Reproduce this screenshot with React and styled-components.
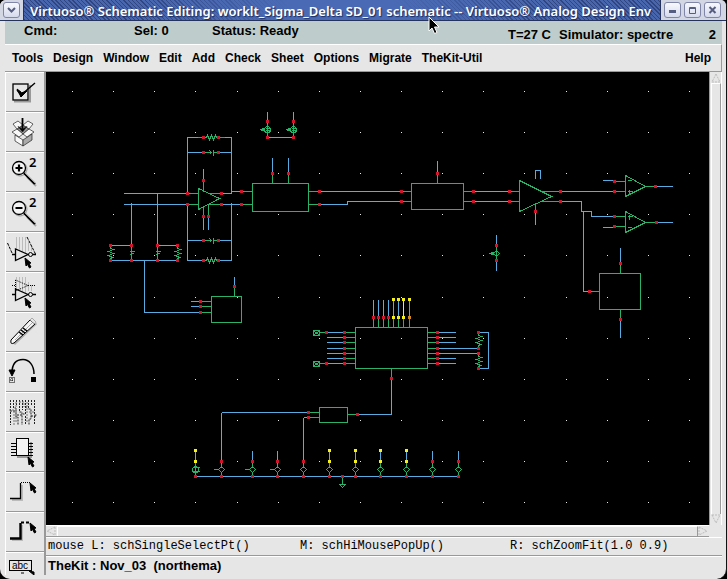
import React from 'react';
import styled, { createGlobalStyle } from 'styled-components';

const GlobalStyle = createGlobalStyle`
  * {
    box-sizing: border-box;
  }
  body {
    margin: 0;
    background: #000;
    font-family: 'Liberation Sans', Arial, sans-serif;
    color: #000;
  }
  button {
    margin: 0;
    padding: 0;
    border: 0;
    background: none;
    color: inherit;
    font: inherit;
  }
`;

const Window = styled.div`
  position: relative;
  display: flex;
  flex-direction: column;
  height: 100vh;
  overflow: hidden;
  background: #e6e6e6;
  border-right: 1px solid #111;
  border-radius: 6px 6px 10px 10px;
`;

const TitleBar = styled.header`
  display: flex;
  flex: none;
  height: 21px;
  background: #d3d7e4;
  border-bottom: 1px solid #25335c;
`;

const TitleStrip = styled.div`
  flex: 1;
  min-width: 0;
  overflow: hidden;
  margin-left: 3px;
  padding-left: 6px;
  border-left: 1px solid #25335c;
  border-right: 1px solid #25335c;
  background:
    linear-gradient(90deg, transparent 18%, #4a6ab5 42%, #4a6ab5 58%, transparent 82%),
    repeating-linear-gradient(45deg, #30457f 0 1px, #4866ae 1px 3px);
`;

const Title = styled.h1`
  margin: 0;
  color: #fff;
  font-family: 'Noto Sans', sans-serif;
  font-size: 13px;
  font-weight: 600;
  line-height: 22px;
  white-space: nowrap;
  text-shadow: 1px 1px 1px #1c2c5c;
`;

const WindowButtons = styled.div`
  display: flex;
  gap: 3px;
  padding: 0 5px 0 3px;
`;

const WindowButton = styled.button`
  width: 17px;
  height: 16px;
  margin-top: 2px;
  margin-left: ${({ $menu }) => ($menu ? '3px' : '0')};
  border: 1px solid #7f86a8;
  border-radius: 3px;
  background: linear-gradient(#f8f9fe, #d5daec);
  svg {
    display: block;
    margin: auto;
  }
`;

const StatusBar = styled.div`
  display: flex;
  flex: none;
  height: 23px;
  margin: 0 4px 0 5px;
  padding: 0 6px 0 19px;
  background: #becccb;
  font-size: 13px;
  font-weight: bold;
  line-height: 19px;
  white-space: pre;
`;

const StatusItem = styled.span`
  width: ${({ $width }) => $width};
  flex: ${({ $grow }) => ($grow ? 1 : 'none')};
  padding-top: ${({ $low }) => ($low ? '4px' : '0')};
  text-align: ${({ $right }) => ($right ? 'right' : 'left')};
`;

const MenuBar = styled.nav`
  display: flex;
  flex: none;
  gap: 10px;
  height: 28px;
  margin: 0 4px 0 5px;
  padding: 0 10px 0 7px;
  border-top: 1px solid #fff;
  border-right: 1px solid #999;
  border-bottom: 1px solid #999;
  font-size: 12px;
  font-weight: bold;
`;

const MenuItem = styled.button`
  margin-left: ${({ $last }) => ($last ? 'auto' : '0')};
`;

const Body = styled.main`
  display: flex;
  flex: 1;
  min-height: 0;
  margin: 0 4px 4px 5px;
`;

const Toolbar = styled.div`
  flex: none;
  width: 41px;
  margin-right: -1px;
  overflow: hidden;
  border-left: 1px solid #fff;
  border-right: 2px solid #999;
`;

const ToolButton = styled.button`
  display: block;
  width: 38px;
  height: 40px;
  border-top: 1px solid #fff;
  border-bottom: 1px solid #999;
  svg {
    display: block;
    margin: -1px 0 0 -1px;
  }
`;

const Workspace = styled.section`
  display: flex;
  flex: 1;
  flex-direction: column;
  min-width: 0;
  padding-left: 1px;
`;

const View = styled.div`
  display: flex;
  flex: 1;
  min-height: 0;
`;

const Canvas = styled.svg`
  display: block;
  flex: 1;
  min-width: 0;
  height: 100%;
  background: #000;
`;

const VerticalScroll = styled.div`
  display: flex;
  flex: none;
  flex-direction: column;
  justify-content: space-between;
  width: 13px;
  padding: 1px 0 1px 1px;
  border-right: 1px solid #fff;
  border-left: 1px solid #999;
`;

const HorizontalScroll = styled.div`
  display: flex;
  flex: none;
  justify-content: space-between;
  height: 12px;
  margin-right: 13px;
  border-top: 1px solid #fff;
  border-bottom: 1px solid #999;
`;

const ScrollThumb = styled.div`
  flex: 1;
  border-top: 1px solid #fff;
  border-left: 1px solid #fff;
  border-right: 1px solid #999;
`;

const ScrollArrow = styled.button`
  flex: none;
  width: 11px;
  height: 10px;
  svg {
    display: block;
  }
`;

const MouseLine = styled.div`
  display: grid;
  grid-template-columns: 252fr 210fr 212fr;
  flex: none;
  height: 19px;
  padding-left: 2px;
  border-top: 1px solid #fff;
  border-bottom: 1px solid #999;
  font-family: 'Liberation Mono', monospace;
  font-size: 12px;
  line-height: 17px;
  white-space: nowrap;
`;

const Message = styled.div`
  flex: none;
  height: 19px;
  padding-left: 2px;
  border-top: 1px solid #fff;
  font-size: 13px;
  font-weight: bold;
  line-height: 18px;
  white-space: pre;
`;

const Pointer = styled.svg`
  position: absolute;
  top: 16px;
  left: 428px;
`;

const GREEN = '#2bb269';
const BLUE = '#58acdf';
const RED = '#d0142c';
const YELLOW = '#f4f01e';
const ORANGE = '#cf8a22';

const MENUS = ['Tools', 'Design', 'Window', 'Edit', 'Add', 'Check', 'Sheet', 'Options', 'Migrate', 'TheKit-Util'];

const SmallCursor = ({ x, y }) => (
  <path transform={`translate(${x} ${y})`} d='M0 0L6 5L4 5.500L6 9L4.500 10L2.500 6.500L1 8Z' fill='#000' />
);

const Magnifier = ({ plus }) => (
  <g fill='none' stroke='#000'>
    <path d='M22 25L31 34' stroke='#aaa' strokeWidth='2' />
    <circle cx='15' cy='17' r='7' stroke='#999' />
    <circle cx='14' cy='16' r='6.500' fill='#f4f4f4' strokeWidth='1.300' />
    <path d={plus ? 'M10.500 16H17.500M14 12.500V19.500' : 'M10.500 16H17.500'} strokeWidth='2.200' />
    <path d='M19 21L30 32' strokeWidth='2.200' />
    <path d='M20 21L30 31' stroke='#ddd' strokeWidth='0.700' />
    <text x='24' y='15' fill='#000' stroke='none' fontFamily='Noto Sans' fontSize='13' fontWeight='600'>2</text>
  </g>
);

const Gate = ({ ghost }) => (
  <g fill='none' stroke='#000'>
    <path d='M11.500 5V18M14.500 5V18M17.500 5V20M20.500 5V21M23.500 10V19M26.500 13V19' stroke='#bbb' />
    {ghost ? (
      <path d='M10.500 8V19L23 13.500ZM7 13.500H10M23 13.500H30' strokeDasharray='1 1' />
    ) : (
      <path d='M2.500 11L7.500 22M22 5L30.500 22' strokeDasharray='3 1' />
    )}
    <path d='M10.500 17V28.500L23 22.500ZM7 22.500H10.500M27.500 22.500H31' strokeWidth='1.300' />
    <circle cx='25.500' cy='22.500' r='2' />
    <SmallCursor x={20} y={26} />
  </g>
);

const WireCorner = ({ thick }) => (
  <g fill='none' stroke='#000'>
    <path d='M7 28H17V13' stroke='#bbb' strokeWidth='2' />
    <path d='M5 26.500H15.500V11' strokeWidth={thick ? 2.400 : 1.300} />
    <path d='M16 10.500H26' strokeWidth={thick ? 2 : 1} strokeDasharray={thick ? '3 2' : '1 1'} />
    <SmallCursor x={25} y={11} />
  </g>
);

const TOOLS = [
  {
    name: 'Check and save',
    icon: (
      <g fill='none' stroke='#000'>
        <path d='M9 29.500H25V13' stroke='#999' strokeWidth='2' />
        <rect x='8' y='12' width='15' height='16' strokeWidth='1.300' />
        <path d='M12 18L16 23L30 11' strokeWidth='1.400' />
        <path d='M12 17L16 20V25Z M16 25L22 19L16 21Z' fill='#000' />
      </g>
    ),
  },
  {
    name: 'Save',
    icon: (
      <g fill='#f8f8f8' stroke='#222' strokeWidth='0.700'>
        <path d='M10 23L18 28V34L10 29Z' />
        <path d='M18 28L27 22V28L18 34Z' fill='#aaa' />
        <path d='M12 17L18 13L24 17L18 22Z' fill='#999' />
        <path d='M12 17L18 22L14 25L7 20ZM24 17L18 22L22 25L29 20ZM12 17L8 12L13 9L18 13ZM24 17L28 12L23 9L18 13Z' />
        <path d='M17.500 6V18' stroke='#000' strokeWidth='1.800' />
        <path d='M13 14.500L17.500 20L22 14.500L17.500 17Z' fill='#000' />
      </g>
    ),
  },
  { name: 'Zoom in', icon: <Magnifier plus /> },
  { name: 'Zoom out', icon: <Magnifier /> },
  { name: 'Stretch', icon: <Gate /> },
  { name: 'Copy', icon: <Gate ghost /> },
  {
    name: 'Delete',
    icon: (
      <g fill='none' stroke='#000'>
        <path d='M9 32L31 11' stroke='#aaa' strokeWidth='3' />
        <path d='M6 28L25 8L30 12L9 31Q5 33 6 28Z' fill='#f5f5f5' />
        <path d='M10 28L27 11' stroke='#aaa' />
        <path d='M14 20L18 23M16 18L20 21M18 16L22 19' strokeWidth='1.500' />
        <path d='M25 8L27 6L31 10L30 12' fill='#e6e6e6' stroke='#aaa' />
      </g>
    ),
  },
  {
    name: 'Undo',
    icon: (
      <g fill='none' stroke='#000'>
        <path d='M7 21C7 11 12 7.500 18 7.500C24 7.500 29 13 29 22' strokeWidth='1.500' />
        <path d='M4 18H10L7 24Z' fill='#000' />
        <rect x='26.500' y='25.500' width='4' height='4' fill='#000' />
        <rect x='4.500' y='25.500' width='5' height='5' strokeDasharray='1 1' />
        <path d='M5 28H9M7 26V30' strokeDasharray='1 1' />
      </g>
    ),
  },
  {
    name: 'Property',
    icon: (
      <g fill='none' stroke='#222' strokeDasharray='2 1'>
        <path d='M5.500 8V33M8.500 8V16H11V25H13V33M11.500 8V14M14.500 8V20H17V33M17.500 8V18M20.500 8V22H18M20.500 24V33M23.500 8V17H26V27H24V33M26.500 8V14M29.500 8V23H32M29.500 24V33M5 19H10M12 23H17M20 15H24M26 24H31' />
        <path d='M4 18H9V33M14 10H19V15M24 20H29M11 10V30M22 10V30' stroke='#777' />
      </g>
    ),
  },
  {
    name: 'Instance',
    icon: (
      <g stroke='#000'>
        <path d='M12 25H26V10' fill='none' stroke='#999' strokeWidth='2' />
        <path d='M6 11.500H28M6 14.500H28M6 17.500H28M6 20.500H28M6 23.500H28' />
        <rect x='11.500' y='6.500' width='12' height='17' fill='#f4f4f4' />
        <SmallCursor x={23} y={25} />
      </g>
    ),
  },
  { name: 'Wire narrow', icon: <WireCorner /> },
  { name: 'Wire wide', icon: <WireCorner thick /> },
  {
    name: 'Wire name',
    icon: (
      <g fill='none' stroke='#000'>
        <rect x='4.500' y='8.500' width='22' height='10' />
        <text x='7' y='17' fill='#000' stroke='none' fontFamily='Liberation Sans' fontSize='10'>abc</text>
        <path d='M16 21H19M24 19L29 23V20Z' fill='#000' />
      </g>
    ),
  },
];

// every source on the bottom rail: x, top of its net, yellow probe pins, tick on its left side
const SOURCES = [
  { x: 195, probe: true, meter: true },
  { x: 221, top: 412, tick: true },
  { x: 252, tick: true },
  { x: 277, tick: true },
  { x: 303, top: 417 },
  { x: 329, probe: true },
  { x: 355, probe: true },
  { x: 380, probe: true },
  { x: 406, probe: true },
  { x: 432 },
  { x: 458 },
];

const BUS_PINS = [332, 337, 342, 348, 353, 358, 363];

const Wire = ({ d, color = BLUE }) => <path d={d} fill='none' stroke={color} />;

const Pin = ({ x, y, color = RED }) => <rect x={x - 1.5} y={y - 1.5} width='3' height='3' fill={color} />;

const Pins = ({ at }) => at.map(([x, y]) => <Pin key={`${x}-${y}`} x={x} y={y} />);

const Block = ({ x, y, w, h }) => <rect x={x} y={y} width={w} height={h} fill='none' stroke={GREEN} />;

const Diamond = ({ x, y }) => (
  <path
    d={`M${x} ${y - 3}L${x + 3} ${y}L${x} ${y + 3}L${x - 3} ${y}Z`}
    fill='none'
    stroke={GREEN}
    strokeWidth='1.400'
  />
);

const Resistor = ({ x, y, vertical }) => (
  <Wire
    color={GREEN}
    d={
      vertical
        ? `M${x} ${y}v3l3 1l-5 2l5 2l-5 2l4 2l-2 1v2`
        : `M${x} ${y}h3l1 -2l2 4l2 -4l2 4l2 -4l1 2h2`
    }
  />
);

const Capacitor = ({ x, y, vertical }) => (
  <Wire
    color={GREEN}
    d={
      vertical
        ? `M${x} ${y}v15M${x - 2} ${y + 6}h5M${x - 2} ${y + 10}l2 -2h2`
        : `M${x} ${y}h8M${x + 10} ${y}h5M${x + 6} ${y - 2}l2 2l-2 2M${x + 10} ${y - 3}v6`
    }
  />
);

const Grid = () => {
  const dots = [];
  for (let row = 0; row < 11; row++) {
    for (let col = 0; col < 16; col++) {
      dots.push(
        <rect
          key={`${row}-${col}`}
          x={Math.round(72 + col * 41.13) - 0.5}
          y={Math.round(91 + row * 41.1) - 0.5}
          width='1'
          height='1'
          fill='#e8e8e8'
        />
      );
    }
  }
  return dots;
};

const InputStage = () => (
  <g>
    <Wire d='M123 193H187M123 204H187M131 202V245M157 193V245M110 245H131M157 245H177M110 260H178M144 260V312H200' />
    <Wire d='M187 193V137H197M224 137H231V193M187 152H203M218 152H231' />
    <Wire d='M187 204V260H203M218 260H231V202M187 240H203M218 240H231' />
    <Wire d='M203 168V180M203 216V229M208 216V229M221 193H231V191H241M221 204H241' />
    <Wire color={GREEN} d='M187 193H198M187 204H198M203 180V191M203 216V206M208 216V204M208 193H221M208 204H221M197 137H203M218 137H224' />
    <Wire color={GREEN} d='M198 188V209L219 198ZM241 191H252M241 204H252' />
    <Resistor x={203} y={137} />
    <Resistor x={203} y={260} />
    <Capacitor x={203} y={152} />
    <Capacitor x={203} y={240} />
    <Resistor x={110} y={245} vertical />
    <Resistor x={177} y={245} vertical />
    <Capacitor x={131} y={245} vertical />
    <Capacitor x={157} y={245} vertical />
    <Pins
      at={[
        [187, 193], [187, 204], [203, 137], [218, 137], [203, 152], [218, 152],
        [203, 240], [218, 240], [203, 260], [218, 260], [203, 180], [203, 216],
        [208, 216], [221, 193], [221, 204], [241, 191], [241, 204],
        [110, 245], [131, 245], [157, 245], [177, 245],
        [110, 260], [131, 260], [157, 260], [177, 260],
      ]}
    />
    <Block x={211} y={296} w={30} h={26} />
    <Wire d='M190 301H200M190 306H200M234 276V286' />
    <Wire color={GREEN} d='M200 301H211M200 306H211M200 312H211M234 286V296' />
    <Pins at={[[200, 301], [200, 306], [200, 312], [234, 286]]} />
  </g>
);

const TwinSources = () => (
  <g>
    <Wire d='M267 111V121M293 111V121M267 137H293' />
    {[267, 293].map((x) => (
      <g key={x}>
        <circle cx={x} cy='129' r='3' fill='none' stroke={GREEN} />
        <Wire color={GREEN} d={`M${x} 121V137M${x - 2} 128H${x + 3}M${x - 2} 130H${x + 3}M${x - 8} 129H${x - 3}M${x - 6} 128H${x - 3}M${x - 7} 130H${x - 3}`} />
      </g>
    ))}
    <Pins at={[[267, 121], [293, 121], [267, 137], [293, 137]]} />
  </g>
);

const SignalChain = () => (
  <g>
    <Block x={252} y={183} w={56} h={28} />
    <Block x={411} y={183} w={52} h={26} />
    <Wire d='M272 157V173M288 157V173M319 191H401M319 204H347V201H401M437 160V173M473 191H509M473 201H509' />
    <Wire color={GREEN} d='M272 173V183M288 173V183M308 191H319M308 204H319M401 191H411M401 201H411M437 173V183M463 191H473M463 201H473M509 191H519M509 201H519' />
    <Wire color={GREEN} d='M519 180V211L551 196ZM541 191H560M541 201H560M535 204V211' />
    <Wire d='M535 178V170H540V178M535 211V224M560 191H614M560 201H581V211H591V216H614M583 211V291H589' />
    <Wire d='M602 180H614M602 227H614M656 186H672M656 222H672' />
    <Wire color={GREEN} d='M614 181H625M614 191H625M614 216H625M614 226H625M645 186H656M645 222H656' />
    <Wire color={GREEN} d='M625 175V196L645 186ZM625 211V232L645 222ZM627 180H631M627 191H632M629 189V194M627 216H632M629 214V219M627 227H631' />
    <Pins
      at={[
        [272, 173], [288, 173], [319, 191], [319, 204], [401, 191], [401, 201],
        [437, 173], [473, 191], [473, 201], [509, 191], [509, 201], [535, 211],
        [560, 191], [560, 201], [614, 181], [614, 191], [614, 216], [614, 226],
        [655, 186], [656, 222],
      ]}
    />
    <Block x={599} y={273} w={41} h={36} />
    <Wire d='M620 247V263M620 319V337' />
    <Wire color={GREEN} d='M620 263V273M620 309V319M589 291H599' />
    <Pins at={[[620, 263], [620, 319], [589, 291]]} />
    <Wire d='M496 234V245M496 260V270' />
    <Wire color={GREEN} d='M496 245V260M488 253H493M490 252H493M490 254H493' />
    <Diamond x={496} y={253} />
    <Pins at={[[496, 245], [496, 260]]} />
  </g>
);

const BusBlock = () => (
  <g>
    <Block x={355} y={327} w={72} h={41} />
    {[373, 378, 383, 388, 393, 398, 403, 409].map((x, i) => (
      <g key={x}>
        <Wire d={`M${x} 299V317`} color={i === 6 ? YELLOW : i === 7 ? ORANGE : BLUE} />
        <Wire d={`M${x} 317V327`} color={GREEN} />
        {i > 3 && <Pin x={x} y={299} color={YELLOW} />}
        <Pin x={x} y={317} color={i < 4 ? RED : i === 7 ? ORANGE : YELLOW} />
      </g>
    ))}
    {BUS_PINS.map((y) => (
      <g key={y}>
        <Wire d={`M326 ${y}H344M437 ${y}H${y === 348 || y === 353 ? 478 : 455}`} />
        <Wire d={`M344 ${y}H355M427 ${y}H437`} color={GREEN} />
        <Pins at={[[344, y], [437, y]]} />
      </g>
    ))}
    {[330, 361].map((y) => (
      <g key={y}>
        <Block x={313} y={y} w={6} h={5} />
        <Wire color={GREEN} d={`M313 ${y}L319 ${y + 5}M319 ${y}L313 ${y + 5}M319 ${y + 2}H326`} />
        <Pin x={326} y={y + 2} />
      </g>
    ))}
    <Resistor x={478} y={332} vertical />
    <Resistor x={478} y={353} vertical />
    <Wire d='M478 332H488V368H478' />
    <Pins at={[[478, 332], [478, 348], [478, 353], [478, 368]]} />
    <Wire d='M391 378V414H357M308 412H221M308 417H303' />
    <Wire color={GREEN} d='M391 368V378M357 414H347M308 412H319M308 417H319' />
    <Block x={319} y={407} w={28} h={15} />
    <Pins at={[[391, 378], [357, 414], [308, 412], [308, 417]]} />
  </g>
);

const SourceRail = () => (
  <g>
    <Wire d='M195 476H458' />
    {SOURCES.map(({ x, top = 450, probe, meter, tick }) => (
      <g key={x}>
        <Wire d={`M${x} ${top}V461`} />
        <Wire color={GREEN} d={`M${x} 461V467M${x} 471V476`} />
        {meter ? (
          <>
            <circle cx={x} cy='469' r='3' fill='none' stroke={GREEN} />
            <Wire color={GREEN} d={`M${x - 3} 467H${x + 4}M${x - 3} 471H${x + 4}M${x} 466V472`} />
          </>
        ) : (
          <Diamond x={x} y={469} />
        )}
        {tick && <Wire color={GREEN} d={`M${x - 8} 469H${x - 3}`} />}
        {probe && <Pin x={x} y={450} color={YELLOW} />}
        <Pin x={x} y={461} color={probe ? YELLOW : RED} />
        <Pin x={x} y={476} />
      </g>
    ))}
    <Wire color={GREEN} d='M342 476V484M339 484H345L342 487Z' />
    <Pin x={342} y={476} />
  </g>
);

const Schematic = () => (
  <Canvas role='img' aria-label='Schematic'>
    <g transform='translate(-45.5 -71.5)' shapeRendering='crispEdges'>
      <Grid />
      <InputStage />
      <TwinSources />
      <SignalChain />
      <BusBlock />
      <SourceRail />
    </g>
  </Canvas>
);

const Arrow = ({ d }) => (
  <svg width='11' height='10' fill='none' stroke='#bbb' strokeDasharray='2 1'>
    <path d={d} />
  </svg>
);

const App = () => {
  return (
    <Window>
      <GlobalStyle />
      <TitleBar>
        <WindowButton $menu aria-label='Window menu'>
          <svg width='11' height='10' fill='none' stroke='#555e80' strokeWidth='2'>
            <path d='M2 3L5.500 6.500L9 3' />
          </svg>
        </WindowButton>
        <TitleStrip>
          <Title>Virtuoso® Schematic Editing: worklt_Sigma_Delta SD_01 schematic -- Virtuoso® Analog Design Env</Title>
        </TitleStrip>
        <WindowButtons>
          <WindowButton aria-label='Minimize'>
            <svg width='11' height='10' stroke='#555e80' strokeWidth='3'>
              <path d='M2 6.500H9' />
            </svg>
          </WindowButton>
          <WindowButton aria-label='Maximize'>
            <svg width='11' height='10' fill='none' stroke='#555e80'>
              <path d='M2.500 2.500H8.500V8.500H2.500ZM2 3.500H9' />
            </svg>
          </WindowButton>
          <WindowButton aria-label='Close'>
            <svg width='11' height='10' stroke='#555e80' strokeWidth='2'>
              <path d='M2.500 2L8.500 8M8.500 2L2.500 8' />
            </svg>
          </WindowButton>
        </WindowButtons>
      </TitleBar>

      <StatusBar>
        <StatusItem $width='110px'>Cmd:</StatusItem>
        <StatusItem $width='78px'>Sel: 0</StatusItem>
        <StatusItem $grow>Status: Ready</StatusItem>
        <StatusItem $width='51px' $low>T=27 C</StatusItem>
        <StatusItem $width='114px' $low>Simulator: spectre</StatusItem>
        <StatusItem $width='43px' $low $right>2</StatusItem>
      </StatusBar>

      <MenuBar>
        {MENUS.map((menu) => (
          <MenuItem key={menu}>{menu}</MenuItem>
        ))}
        <MenuItem $last>Help</MenuItem>
      </MenuBar>

      <Body>
        <Toolbar>
          {TOOLS.map(({ name, icon }) => (
            <ToolButton key={name} aria-label={name}>
              <svg width='38' height='40'>{icon}</svg>
            </ToolButton>
          ))}
        </Toolbar>
        <Workspace>
          <View>
            <Schematic />
            <VerticalScroll>
              <ScrollArrow aria-label='Scroll up'>
                <Arrow d='M5 1L9 9H1Z' />
              </ScrollArrow>
              <ScrollThumb />
              <ScrollArrow aria-label='Scroll down'>
                <Arrow d='M1 1H9L5 9Z' />
              </ScrollArrow>
            </VerticalScroll>
          </View>
          <HorizontalScroll>
            <ScrollArrow aria-label='Scroll left'>
              <Arrow d='M9 1V9L1 5Z' />
            </ScrollArrow>
            <ScrollThumb />
            <ScrollArrow aria-label='Scroll right'>
              <Arrow d='M1 1V9L9 5Z' />
            </ScrollArrow>
          </HorizontalScroll>
          <MouseLine>
            <span>mouse L: schSingleSelectPt()</span>
            <span>M: schHiMousePopUp()</span>
            <span>R: schZoomFit(1.0 0.9)</span>
          </MouseLine>
          <Message>TheKit : Nov_03  (northema)</Message>
        </Workspace>
      </Body>

      <Pointer width='12' height='19' viewBox='0 0 12 19'>
        <path d='M1 1V15L4 12L6.500 17.500L9 16.500L6.500 11H11Z' fill='#000' stroke='#fff' />
      </Pointer>
    </Window>
  );
};

export default App;
